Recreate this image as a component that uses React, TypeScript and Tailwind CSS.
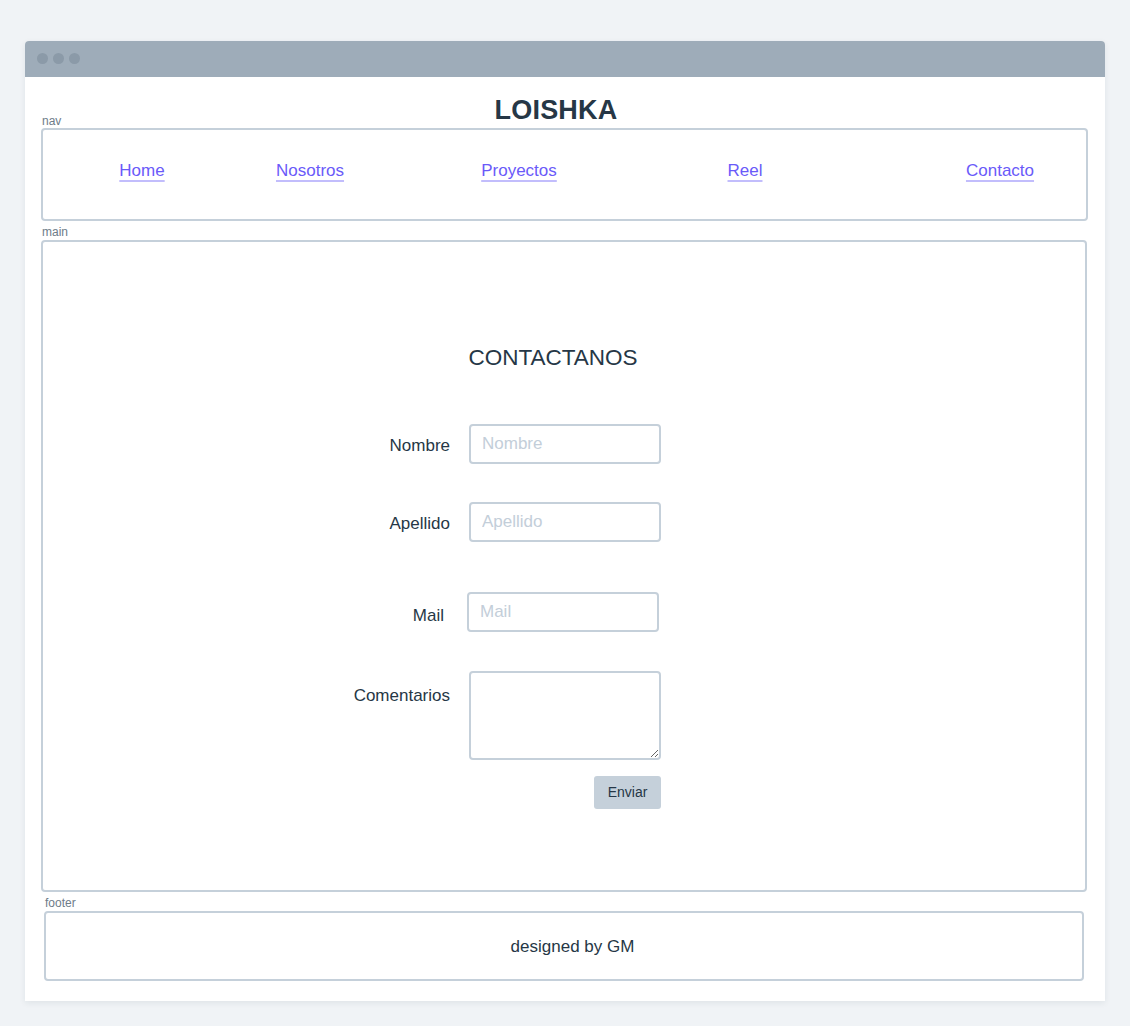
const links = [
  { label: "Home", ml: "ml-[49px]" },
  { label: "Nosotros", ml: "ml-[68px]" },
  { label: "Proyectos", ml: "ml-[109px]" },
  { label: "Reel", ml: "ml-[126px]" },
  { label: "Contacto", ml: "ml-[155px]" },
];

function BoxLabel({ children, className = "" }: { children: string; className?: string }) {
  return <div className={`text-[12px] leading-[12px] text-[#6e7c89] ${className}`}>{children}</div>;
}

const inputCls =
  "w-[192px] h-[40px] border-2 border-[#c5d0da] rounded-[4px] px-[11px] text-[17px] text-[#263746] placeholder:text-[#c3ced9] outline-none bg-white";

export default function App() {
  return (
    <div className="min-h-[1026px] bg-[#f0f3f6] pt-[41px] px-[25px] pb-[25px] font-['Liberation_Sans',Arial,sans-serif] text-[#263746]">
      <div className="bg-white rounded-t-[4px] shadow-[0_2px_6px_rgba(30,50,70,0.08)]">
        {/* window bar */}
        <div className="h-[36px] bg-[#9eacb9] rounded-t-[4px] flex items-center gap-[5px] pl-[12px] pb-[2px]">
          <span className="w-[11px] h-[11px] rounded-full bg-[#8b9aa8]" />
          <span className="w-[11px] h-[11px] rounded-full bg-[#8b9aa8]" />
          <span className="w-[11px] h-[11px] rounded-full bg-[#8b9aa8]" />
        </div>

        <div className="px-[16px] pt-[19px] pb-[20px] flex flex-col">
          <h1 className="text-[27px] leading-[28px] font-bold text-center pr-[18px] tracking-[0.2px]">LOISHKA</h1>

          <BoxLabel className="mt-[-9px] mb-[1px] pl-[1px]">nav</BoxLabel>
          <nav className="h-[93px] mr-[1px] border-2 border-[#c5d0da] rounded-[4px] flex items-start pt-[29px]">
            {links.map((l) => (
              <span key={l.label} className={`w-[100px] text-center ${l.ml}`}>
                <a
                  href="#"
                  className="text-[17px] leading-[20px] text-[#6a5af9] underline decoration-2 underline-offset-[4px] decoration-[#c2bdfc]"
                >
                  {l.label}
                </a>
              </span>
            ))}
          </nav>

          <BoxLabel className="mt-[5px] mb-[2px] pl-[1px]">main</BoxLabel>
          <main className="h-[652px] mr-[2px] border-2 border-[#c5d0da] rounded-[4px] flex flex-col pt-[103px]">
            <h2 className="text-[22.5px] leading-[26px] text-center pr-[22px]">CONTACTANOS</h2>

            <form className="w-[351px] ml-[267px] mt-[53px] flex flex-col text-[17px]">
              <div className="flex items-center">
                <label className="w-[140px] text-right pt-[3px]">Nombre</label>
                <input className={`${inputCls} ml-[19px]`} placeholder="Nombre" />
              </div>
              <div className="flex items-center mt-[38px]">
                <label className="w-[140px] text-right pt-[3px]">Apellido</label>
                <input className={`${inputCls} ml-[19px]`} placeholder="Apellido" />
              </div>
              <div className="flex items-center mt-[50px] ml-[-2px]">
                <label className="w-[140px] text-right pr-[4px] pt-[8px]">Mail</label>
                <input className={`${inputCls} ml-[19px]`} placeholder="Mail" />
              </div>
              <div className="flex items-start mt-[39px]">
                <label className="w-[140px] text-right pt-[12px]">Comentarios</label>
                <textarea className="w-[192px] h-[89px] ml-[19px] border-2 border-[#c5d0da] rounded-[4px] px-[11px] py-[8px] text-[17px] outline-none" />
              </div>
              <button
                type="button"
                className="self-end mt-[16px] w-[67px] h-[33px] bg-[#c5d0da] rounded-[3px] text-[14px] text-[#263746]"
              >
                Enviar
              </button>
            </form>
          </main>

          <BoxLabel className="mt-[5px] mb-[2px] pl-[4px]">footer</BoxLabel>
          <footer className="h-[70px] ml-[3px] mr-[5px] border-2 border-[#c5d0da] rounded-[4px] flex items-center justify-center pl-[17px]">
            <p className="text-[17px] pt-[2px]">designed by GM</p>
          </footer>
        </div>
      </div>
    </div>
  );
}
